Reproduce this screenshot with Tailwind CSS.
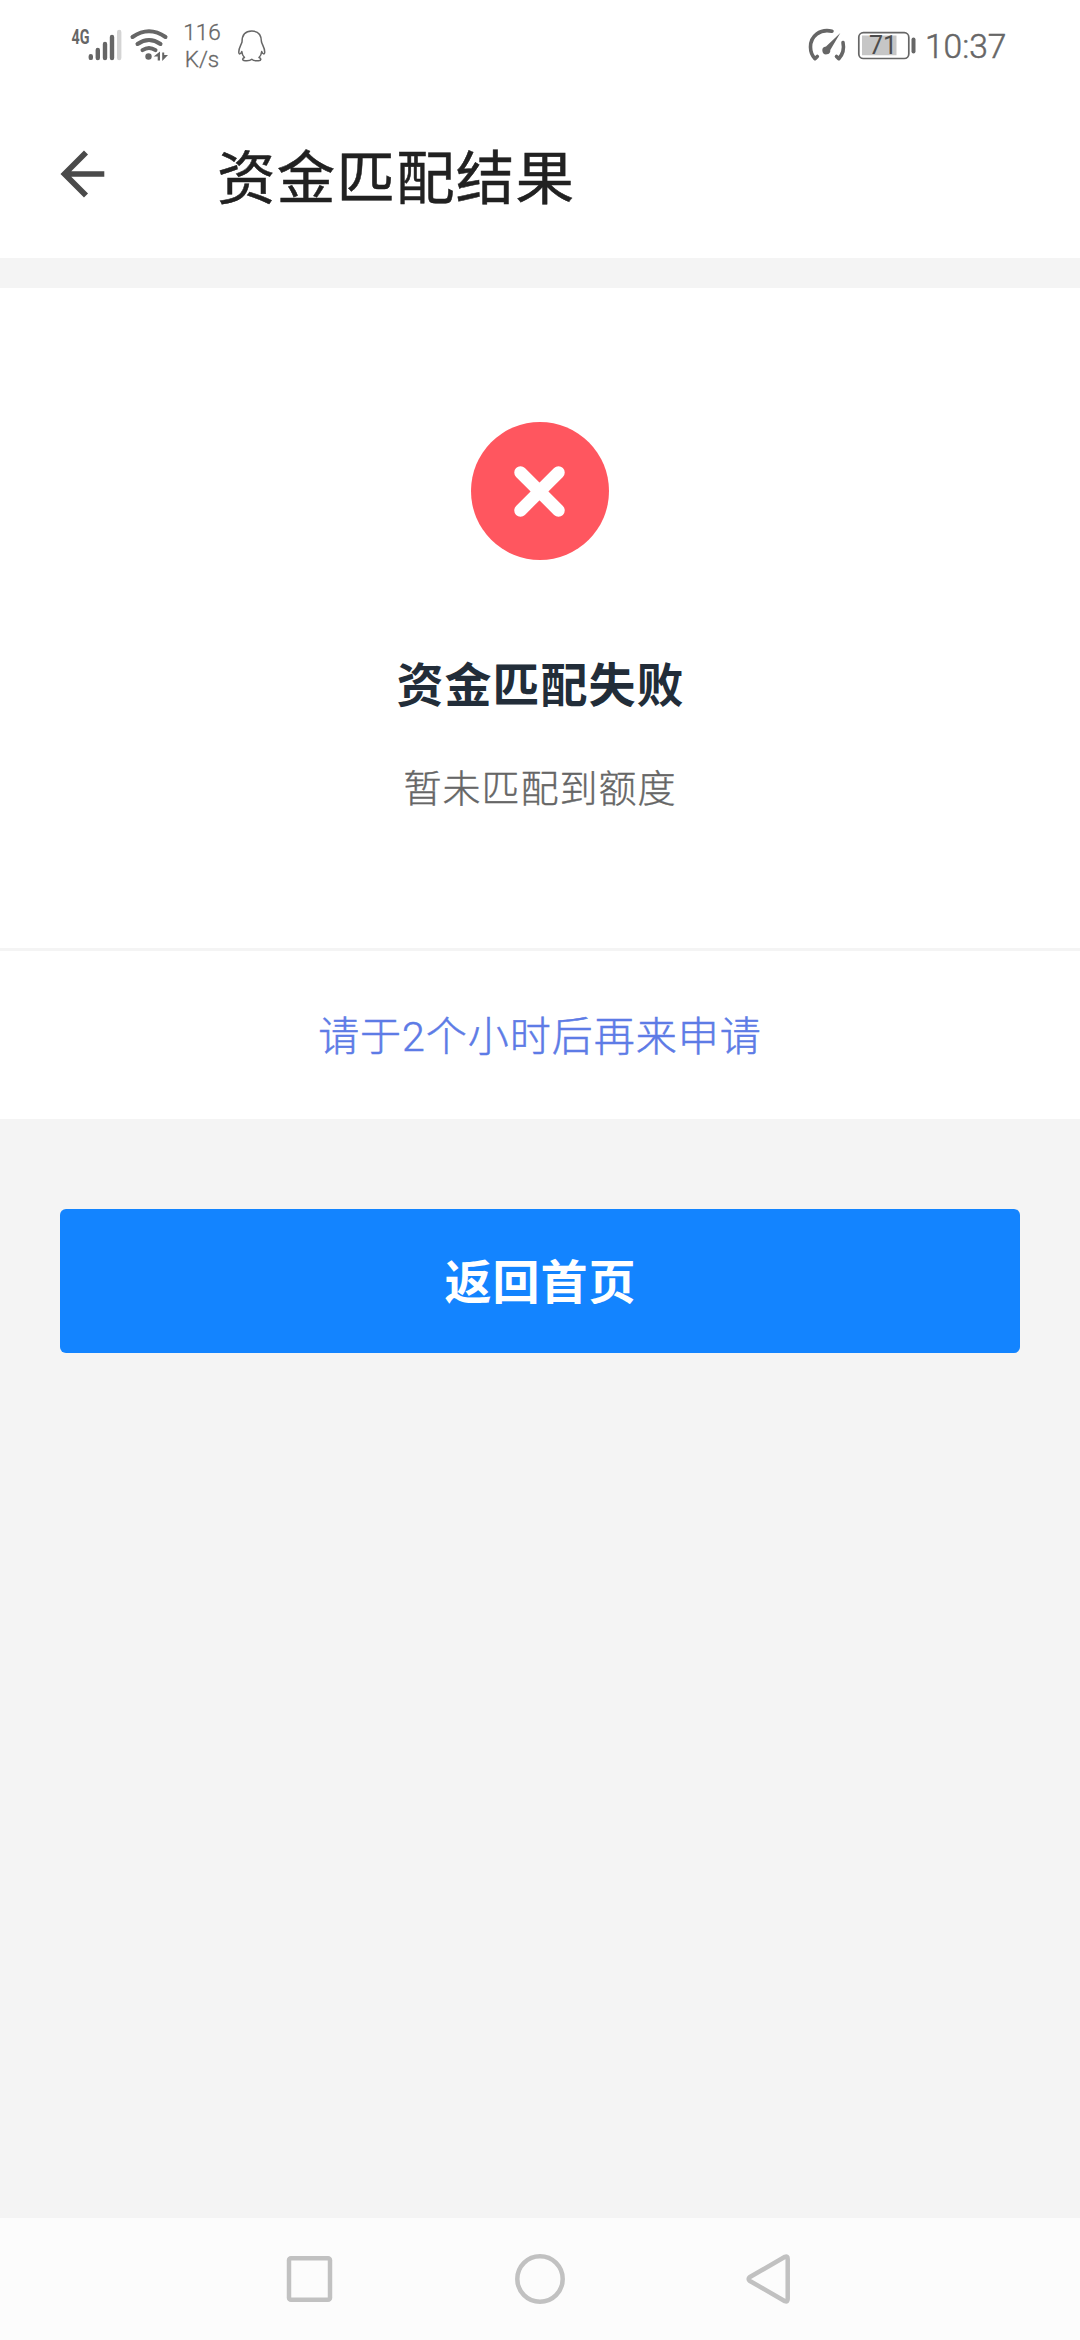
<!DOCTYPE html>
<html lang="zh-CN">
<head>
<meta charset="utf-8">
<title>资金匹配结果</title>
<script src="https://cdn.jsdelivr.net/npm/@tailwindcss/browser@4"></script>
</head>
<body class="bg-[#f4f4f4] font-[Roboto,'Noto_Sans_CJK_SC',sans-serif]">
<div class="flex h-[2340px] w-[1080px] flex-col overflow-hidden">
  <!-- status bar -->
  <div class="flex h-[90px] shrink-0 items-start justify-between bg-white pl-[70px] pr-[70px] text-[#666]">
    <div class="flex">
      <svg class="h-[90px] w-[112px]" viewBox="70 0 112 90" fill="none" stroke="#666" stroke-linecap="round">
        <text x="71.5" y="43.800" font-size="20" font-weight="700" font-family="Roboto" fill="#666" stroke="none" textLength="18" lengthAdjust="spacingAndGlyphs">4G</text>
        <path stroke-width="4.4" d="M90.8 56.3v1.6M97.8 50v8M105 44v14M112 37v21"/>
        <path stroke="#d4d4d4" stroke-width="4.4" d="M119.200 32v26"/>
        <path stroke-width="4" d="M132.500 37q16.500-11.500 33 0M137.500 44q11.500-8 23 0M142.500 50.200q6.500-4.400 13 0"/>
        <circle cx="148.500" cy="56.500" r="3.200" fill="#666" stroke="none"/>
        <path fill="#666" stroke="none" d="M160 51.500v9h-2.300v-4h-4zM162.200 61v-8.500h2v2.500h3.800z"/>
      </svg>
      <div class="mt-[19px] w-[40px] text-center text-[22.500px] font-light leading-[27px] [-webkit-text-stroke:0.3px]">116<br>K/s</div>
      <svg class="h-[90px] w-[50px]" viewBox="222 0 50 90" fill="none" stroke="#666" stroke-width="1.500" stroke-linejoin="round">
        <path d="M242 42C242 35 245.500 31 251.800 31S261.500 35 261.500 42C262.300 45 265 48 264.700 52.500C264.500 54.500 263 54.500 261.700 51.500C261.500 54 260.500 56 259 57.500C261.500 58.500 261.500 60.500 258.500 60.700C255.500 61 253 60.500 251.800 59.300C250.500 60.500 248 61 245 60.700C242 60.500 242 58.500 244.500 57.500C243 56 242 54 241.800 51.500C240.500 54.500 239 54.500 238.800 52.500C238.500 48 241.200 45 242 42Z"/>
      </svg>
    </div>
    <div class="flex">
      <svg class="h-[90px] w-[112px]" viewBox="806 0 112 90" fill="none" stroke="#666">
        <path stroke-width="3.600" stroke-linecap="round" stroke-linejoin="round" d="M832 31.200C820 28.500 810.500 36 810.500 47Q810.500 54 815 58.700L817.300 56.500M843 42.500Q845 52 838.800 58.700L836.500 56.500"/>
        <path fill="#666" stroke="none" d="M840.300 33L826 46.400A4 4 0 1 0 830.300 50Z"/>
        <rect x="858.800" y="32.700" width="50" height="25.800" rx="4.500" stroke-width="1.700"/>
        <path fill="#c6c6c6" stroke="none" d="M862 35.500h34.500v19.800h-34.500z"/>
        <text x="869" y="54" font-size="25" font-family="Roboto" fill="#4c4c4c" stroke="none" textLength="28">71</text>
        <path stroke-width="4" stroke-linecap="round" d="M913.500 39.500v12"/>
      </svg>
      <div class="w-[92px] pl-[7px] pt-[26px] text-[33.500px] font-light leading-[42px] [-webkit-text-stroke:0.5px]">10:37</div>
    </div>
  </div>

  <!-- title bar -->
  <header class="flex h-[168px] shrink-0 items-center bg-white pl-[60px]">
    <svg class="h-[48px] w-[46px]" viewBox="60 150 46 48" fill="none" stroke="#4a4a4a" stroke-width="5.700"><path d="M86 152.500L64.500 174L86 195.500M64 174H104.300"/></svg>
    <h1 class="ml-[111px] mt-[9px] text-[58.500px] leading-[90px] tracking-[1.200px] text-[#212121] [-webkit-text-stroke:0.5px]">资金匹配结果</h1>
  </header>

  <!-- result -->
  <section class="mt-[30px] flex h-[660px] shrink-0 flex-col items-center bg-white pt-[134px]">
    <svg class="size-[138px]" viewBox="0 0 138 138"><circle cx="69" cy="69" r="69" fill="#ff565f"/><path stroke="#fff" stroke-width="12.500" stroke-linecap="round" d="M49.500 50.500l38 38M87.500 50.500l-38 38"/></svg>
    <h2 class="mt-[90px] pl-[1px] text-[47px] font-bold leading-[72px] tracking-[1px] text-[#222d39]">资金匹配失败</h2>
    <p class="mt-[37px] text-[38px] font-light leading-[60px] tracking-[1px] text-[#666] [-webkit-text-stroke:0.4px]">暂未匹配到额度</p>
  </section>
  <section class="mt-[3px] flex h-[168px] shrink-0 items-center justify-center bg-white pt-[6px] text-[41px] font-light tracking-[1px] text-[#5d7be6] [-webkit-text-stroke:0.5px]">请于2个小时后再来申请</section>
  <button class="mx-[60px] mt-[90px] h-[144px] shrink-0 rounded-[6px] bg-[#1384ff] pl-[1px] pt-[5px] text-[47px] font-bold tracking-[1px] text-white">返回首页</button>

  <!-- system navigation -->
  <nav class="mt-auto flex h-[122px] shrink-0 justify-center bg-[#fcfcfc]">
    <svg class="h-[122px] w-[560px]" viewBox="260 2218 560 122" fill="none" stroke="#c1c1c1" stroke-width="4.500" stroke-linejoin="round">
      <rect x="289" y="2258.300" width="41" height="41.500" rx="2"/>
      <circle cx="540" cy="2279" r="22.700"/>
      <path d="M749.500 2277.300L785 2256.800Q787.700 2255.800 787.700 2259V2299Q787.700 2302.200 785 2301.200L749.500 2280.700Q747.800 2279 749.500 2277.300Z"/>
    </svg>
  </nav>
</div>
</body>
</html>
